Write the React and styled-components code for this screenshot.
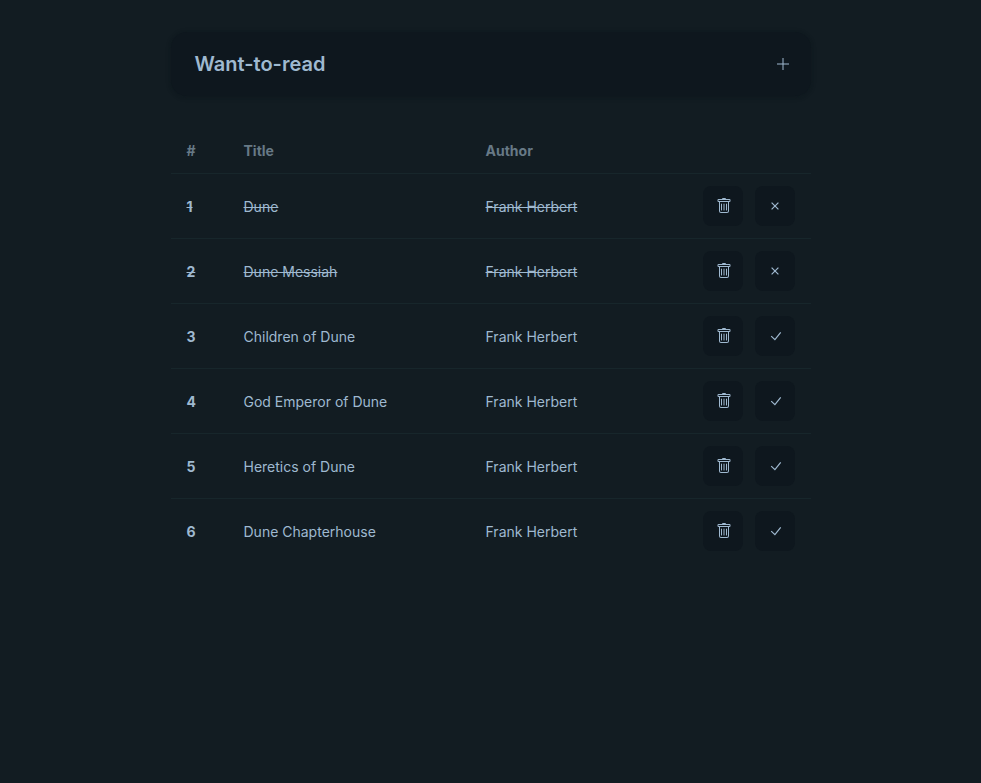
import React from "react";
import styled, { createGlobalStyle } from "styled-components";
import { BsTrash } from "react-icons/bs";

const GlobalStyle = createGlobalStyle`
  *, *::before, *::after { box-sizing: border-box; }
  body {
    margin: 0;
    min-height: 100vh;
    background: #121c22;
    color: #9fb9d0;
    font-family: Inter, sans-serif;
    font-size: 16px;
    line-height: 24px;
  }
`;

const Page = styled.main`
  width: 640px;
  margin: 0 auto;
  padding-top: 32px;
`;

const Navbar = styled.header`
  display: flex;
  align-items: center;
  justify-content: space-between;
  height: 64px;
  padding: 8px;
  border-radius: 16px;
  background: #0e171e;
  box-shadow: 0 1px 3px #0e171e80, 0 1px 5px #0e171e60;
`;

const Heading = styled.h1`
  margin: 0;
  padding-left: 16px;
  font-size: 20px;
  line-height: 28px;
  font-weight: 600;
`;

const Button = styled.button`
  display: inline-flex;
  align-items: center;
  justify-content: center;
  width: 40px;
  height: 40px;
  padding: 0;
  border: 0;
  border-radius: 8px;
  color: inherit;
  cursor: pointer;
  background: ${(p) => (p.$ghost ? "transparent" : "#0e171e")};
`;

const TrashIcon = styled(BsTrash)`
  width: 16px;
  height: 16px;
  margin-left: 2px;
`;

const LineIcon = styled.svg.attrs({
  width: 16,
  height: 16,
  viewBox: "0 0 16 16",
  fill: "none",
  stroke: "currentColor",
})`
  display: block;
  stroke-width: ${(p) => p.$weight}px;
`;

const PlusIcon = () => (
  <LineIcon $weight={1}><path d="M2 8h12M8 2v12" /></LineIcon>
);

const CrossIcon = () => (
  <LineIcon $weight={1.2}><path d="M4.6 4.6l6.8 6.8M11.4 4.6l-6.8 6.8" /></LineIcon>
);

const CheckIcon = () => (
  <LineIcon $weight={1.2}><path d="M4.2 8.1l3.7 3.6 5.8-7.4" /></LineIcon>
);

const Table = styled.table`
  width: 100%;
  margin-top: 33px;
  border-collapse: separate;
  border-spacing: 0;
  text-align: left;
  font-size: 14px;
  line-height: 20px;
`;

const HeadCell = styled.th`
  width: ${(p) => p.$width}px;
  padding: 12px 16px;
  color: #677986;
  font-weight: 700;
`;

const Row = styled.tr`
  text-decoration: ${(p) => (p.$read ? "line-through" : "none")};
`;

const Cell = styled.td`
  height: 65px;
  padding: 12px 16px;
  border-top: 1px solid #17262b;
`;

const TextCell = styled(Cell)`
  padding-top: 14px;
`;

const IndexCell = styled(TextCell).attrs({ as: "th" })`
  font-weight: 700;
`;

const Actions = styled.div`
  display: flex;
  justify-content: flex-end;
  gap: 12px;
`;

const books = [
  { title: "Dune", read: true },
  { title: "Dune Messiah", read: true },
  { title: "Children of Dune", read: false },
  { title: "God Emperor of Dune", read: false },
  { title: "Heretics of Dune", read: false },
  { title: "Dune Chapterhouse", read: false },
];

export default function App() {
  return (
    <>
      <GlobalStyle />
      <Page>
        <Navbar>
          <Heading>Want-to-read</Heading>
          <Button $ghost aria-label="Add book"><PlusIcon /></Button>
        </Navbar>
        <Table>
          <thead>
            <tr>
              <HeadCell $width={57}>#</HeadCell>
              <HeadCell $width={242}>Title</HeadCell>
              <HeadCell $width={160}>Author</HeadCell>
              <HeadCell $width={181} />
            </tr>
          </thead>
          <tbody>
            {books.map((book, i) => (
              <Row key={book.title} $read={book.read}>
                <IndexCell>{i + 1}</IndexCell>
                <TextCell>{book.title}</TextCell>
                <TextCell>Frank Herbert</TextCell>
                <Cell>
                  <Actions>
                    <Button aria-label="Delete"><TrashIcon /></Button>
                    <Button aria-label={book.read ? "Mark unread" : "Mark read"}>
                      {book.read ? <CrossIcon /> : <CheckIcon />}
                    </Button>
                  </Actions>
                </Cell>
              </Row>
            ))}
          </tbody>
        </Table>
      </Page>
    </>
  );
}
